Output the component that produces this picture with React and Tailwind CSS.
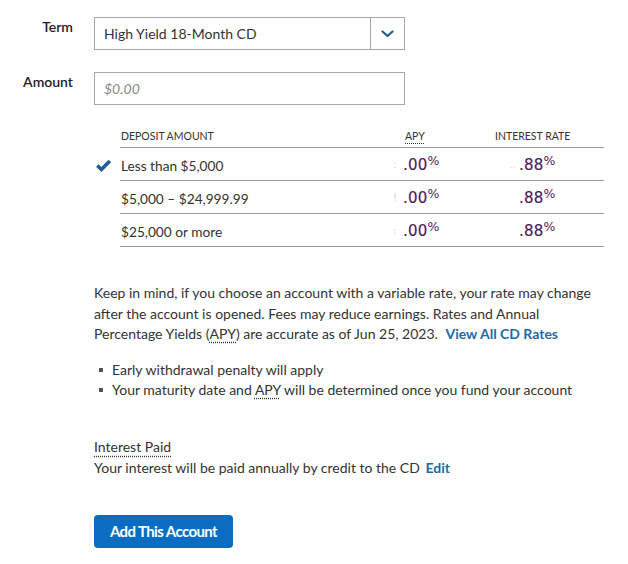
import React from "react";

const rows = [
  { label: "Less than $5,000", checked: true, apyGhost: ":", rateGhost: "‥" },
  { label: "$5,000 – $24,999.99", checked: false, apyGhost: "!", rateGhost: " " },
  { label: "$25,000 or more", checked: false, apyGhost: ":", rateGhost: " " },
];

const Rate = ({ ghost, value }) => (
  <span className="flex items-start h-[20px]" style={{ fontFamily: "'DejaVu Sans', sans-serif" }}>
    <span className="text-[10px] leading-none text-[#d4d4d4] mt-[6px] w-[10px]">{ghost}</span>
    <span className="text-[15px] leading-none text-[#4a1a58] mt-[4px] tracking-[0.2px] [-webkit-text-stroke:0.15px_#4a1a58]">
      {value}
    </span>
    <span className="text-[12.5px] leading-none text-[#4a1a58] mt-[1px]">%</span>
  </span>
);

const App = () => {
  return (
    <div
      className="w-[628px] h-[564px] bg-white text-[#333] pt-[17px]"
      style={{ fontFamily: "Lato, 'Open Sans', sans-serif" }}
    >
      {/* term */}
      <div className="flex">
        <label className="w-[73px] text-right text-[14px] font-semibold text-[#222] -mt-[1px]">
          Term
        </label>
        <div className="ml-[21px] w-[311px] h-[33px] border border-[#a8a8a8] flex">
          <div className="flex-1 flex items-center pl-[9px] text-[14px] text-[#333]">
            High Yield 18-Month CD
          </div>
          <div className="w-[34px] border-l border-[#a8a8a8] flex items-center justify-center">
            <svg width="13" height="8" viewBox="0 0 13 8" fill="none">
              <path d="M1.5 1.5 L6.5 6 L11.5 1.5" stroke="#1f5f8f" strokeWidth="2.2" strokeLinecap="round" strokeLinejoin="round" />
            </svg>
          </div>
        </div>
      </div>

      {/* amount */}
      <div className="flex mt-[22px]">
        <label className="w-[73px] text-right text-[14px] font-semibold text-[#222] -mt-[1px]">
          Amount
        </label>
        <div className="ml-[21px] w-[311px] h-[33px] border border-[#a8a8a8] flex items-center pl-[9px] text-[14px] italic text-[#8a8a8a]">
          $0.00
        </div>
      </div>

      {/* rates table */}
      <div className="mt-[23px] ml-[93px]">
        <div className="flex">
          <div className="w-[27px]"></div>
          <div className="w-[484px] flex items-start pt-[1px] border-b border-[#9a9a9a] h-[20px] text-[10.5px] text-[#333] uppercase">
            <div className="w-[268px] pl-[1px]">Deposit Amount</div>
            <div className="w-[100px] pl-[17px]">
              <span className="underline decoration-dotted underline-offset-[3px]">APY</span>
            </div>
            <div className="flex-1 pl-[7px]">Interest Rate</div>
          </div>
        </div>
        {rows.map((row) => (
          <div key={row.label} className="flex">
            <div className="w-[27px] flex items-center pt-[2px] pl-[2px]">
              {row.checked && (
                <svg width="17" height="14" viewBox="0 0 16 13">
                  <path d="M1 7.2 L3.4 4.8 L6 7.4 L12.8 0.6 L15.2 3 L6 12.2 Z" fill="#1d5d96" />
                </svg>
              )}
            </div>
            <div className="w-[484px] flex items-center border-b border-[#9a9a9a] h-[33px]">
              <div className="w-[268px] pl-[1px] pt-[5px] text-[13.7px] text-[#333]">{row.label}</div>
              <div className="w-[100px] pl-[5px]">
                <Rate ghost={row.apyGhost} value=".00" />
              </div>
              <div className="flex-1 pl-[21px]">
                <Rate ghost={row.rateGhost} value=".88" />
              </div>
            </div>
          </div>
        ))}
      </div>

      {/* disclosure */}
      <div className="ml-[94px] mt-[36px] w-[500px] text-[14px] leading-[20.5px] text-[#333]">
        <p>
          Keep in mind, if you choose an account with a variable rate, your rate may change
          after the account is opened. Fees may reduce earnings. Rates and Annual
          Percentage Yields (<span className="underline decoration-dotted underline-offset-[3px]">APY</span>) are
          accurate as of Jun 25, 2023.{" "}
          <a className="ml-[4px] font-bold text-[#1e6aa5]">View All CD Rates</a>
        </p>
        <ul className="mt-[15px]">
          <li className="flex items-center">
            <span className="w-[4px] h-[4px] bg-[#555] ml-[5px] mr-[9px]"></span>
            Early withdrawal penalty will apply
          </li>
          <li className="flex items-center">
            <span className="w-[4px] h-[4px] bg-[#555] ml-[5px] mr-[9px]"></span>
            <span>
              Your maturity date and{" "}
              <span className="underline decoration-dotted underline-offset-[3px]">APY</span> will be determined once you fund your account
            </span>
          </li>
        </ul>

        <div className="mt-[36px]">
          <span className="underline decoration-dotted underline-offset-[4px]">Interest Paid</span>
        </div>
        <div className="mt-[1px]">
          Your interest will be paid annually by credit to the CD{" "}
          <a className="ml-[2px] font-bold text-[#1e6aa5]">Edit</a>
        </div>

        <button className="mt-[36px] w-[139px] h-[33px] rounded-[4px] bg-[#0b6dc1] text-white text-[15px] font-bold tracking-[-0.6px]">
          Add This Account
        </button>
      </div>
    </div>
  );
};

export default App;
